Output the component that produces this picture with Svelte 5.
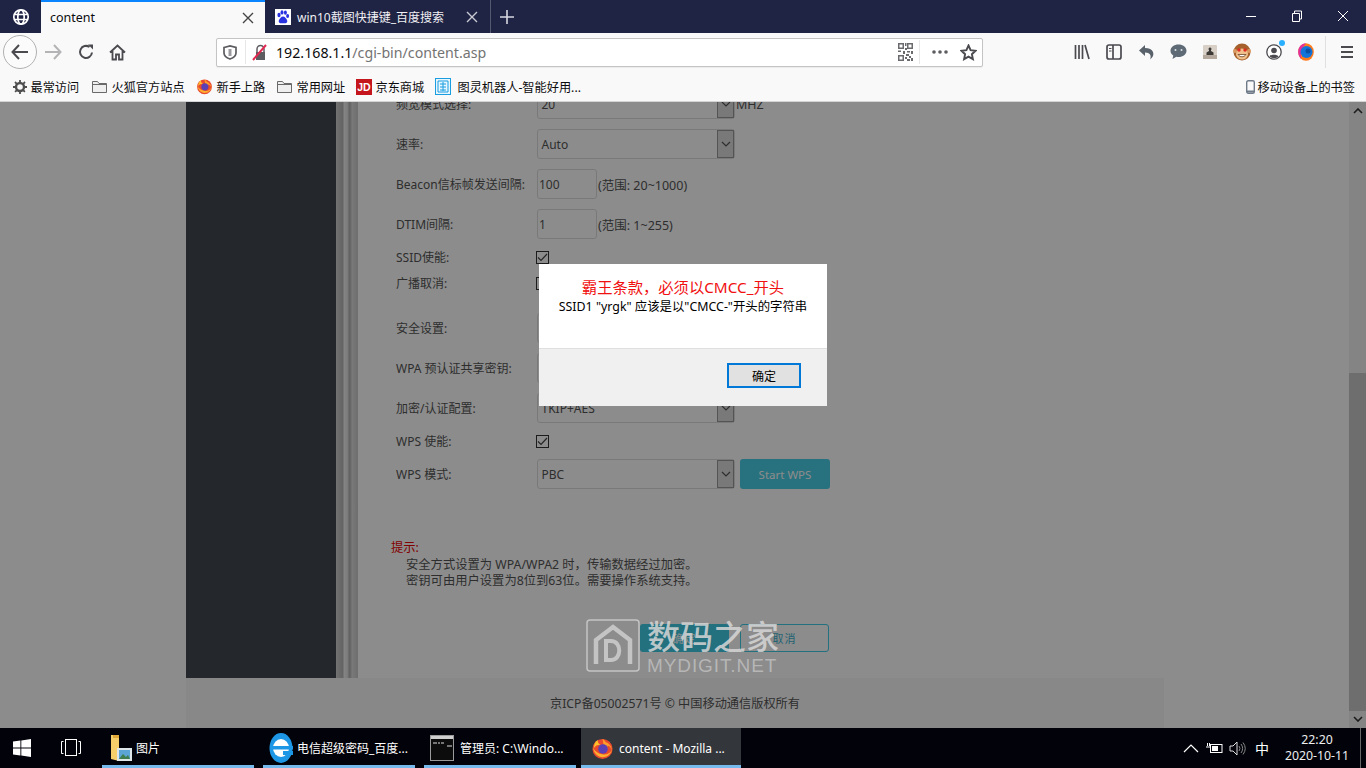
<script>
  // gap is the space above a row, rows are 22px tall
  const rows = [
    { label: "频宽模式选择:", kind: "select", value: "20", after: "MHZ", gap: -9 },
    { label: "速率:", kind: "select", value: "Auto", gap: 18 },
    { label: "Beacon信标帧发送间隔:", kind: "input", value: "100", after: "(范围: 20~1000)", gap: 18 },
    { label: "DTIM间隔:", kind: "input", value: "1", after: "(范围: 1~255)", gap: 18 },
    { label: "SSID使能:", kind: "check", checked: true, gap: 11 },
    { label: "广播取消:", kind: "check", gap: 4 },
    { label: "安全设置:", kind: "select", value: "WPA-PSK/WPA2-PSK", gap: 23 },
    { label: "WPA 预认证共享密钥:", kind: "input", value: "", gap: 18 },
    { label: "加密/认证配置:", kind: "select", value: "TKIP+AES", gap: 18 },
    { label: "WPS 使能:", kind: "check", checked: true, gap: 11 },
    { label: "WPS 模式:", kind: "select", value: "PBC", wps: true, gap: 11 }
  ];
  const bookmarks = [
    { icon: "gear", text: "最常访问", w: 78 },
    { icon: "folder", text: "火狐官方站点", w: 105 },
    { icon: "fox", text: "新手上路", w: 80 },
    { icon: "folder", text: "常用网址", w: 80 },
    { icon: "jd", text: "京东商城", w: 79 },
    { icon: "turing", text: "图灵机器人-智能好用...", w: 150 }
  ];
  const tasks = [
    { icon: "pics", text: "图片" },
    { icon: "ie", text: "电信超级密码_百度..." },
    { icon: "cmd", text: "管理员: C:\\Windo..." },
    { icon: "ff", text: "content - Mozilla ...", active: true }
  ];
</script>

{#snippet fox(size)}
  <svg width={size} height={size} viewBox="0 0 24 24">
    <circle cx="12" cy="12.5" r="10.5" fill="#e8492f" />
    <path d="M12 2c3 1 2 3 5 4 3 2 5 5 5 8-1-3-3-5-5-5 1 2-1 4-3 4z" fill="#ff9d2a" />
    <path d="M2 11c1 6 5 10 10 10 6 0 9-4 10-8-2 4-6 6-10 5-4 0-8-3-10-7z" fill="#ffb02e" />
    <circle cx="12.5" cy="12.5" r="5" fill="#5b3fb5" />
    <path d="M7 3c0 3 1 4 3 5-3 0-6 1-7 4 0-4 1-7 4-9z" fill="#ffc02c" />
  </svg>
{/snippet}

{#snippet folder()}
  <svg width="17" height="16" viewBox="0 0 17 16" fill="#efefef" stroke="#6a6a6a">
    <path d="M1.5 13.5v-11h5l1.5 2h7.5v9z" />
    <path d="M1.5 5.5h14" fill="none" />
  </svg>
{/snippet}

<div class="screen">
  <header class="tabs">
    <div class="tab-icon">
      <svg width="18" height="18" viewBox="0 0 18 18" fill="none" stroke="#fff" stroke-width="1.7">
        <circle cx="9" cy="9" r="7.2" fill="#1f2344" />
        <ellipse cx="9" cy="9" rx="3.2" ry="7.2" />
        <path d="M2 6.5h14M2 11.500h14" />
      </svg>
    </div>
    <div class="tab active">
      <span class="tab-title">content</span>
      <svg class="close" width="12" height="12" viewBox="0 0 12 12" stroke="#444" stroke-width="1.4"><path d="M1 1l10 10M11 1L1 11" /></svg>
    </div>
    <div class="tab other">
      <svg class="baidu" width="16" height="16" viewBox="0 0 16 16">
        <rect width="16" height="16" fill="#fff" />
        <g fill="#2932e1">
          <ellipse cx="4" cy="6" rx="1.6" ry="2.2" />
          <ellipse cx="7" cy="3.4" rx="1.5" ry="2.2" />
          <ellipse cx="10.4" cy="3.6" rx="1.5" ry="2.2" />
          <ellipse cx="12.6" cy="7" rx="1.5" ry="2" />
          <path d="M8 7.5c2 0 3 2 4 3.500 1 2-.5 3.500-2 3.300-1.500-.2-2.500-.2-4 0-1.500.2-3-1.300-2-3.300 1-1.500 2-3.500 4-3.500z" />
        </g>
      </svg>
      <span class="tab-title">win10截图快捷键_百度搜索</span>
      <svg class="close" width="12" height="12" viewBox="0 0 12 12" stroke="#c9cad3" stroke-width="1.4"><path d="M1 1l10 10M11 1L1 11" /></svg>
    </div>
    <div class="new-tab">
      <svg width="14" height="14" viewBox="0 0 14 14" stroke="#d7d8e0" stroke-width="1.6"><path d="M7 0v14M0 7h14" /></svg>
    </div>
    <div class="win-btns">
      <svg width="46" height="12" viewBox="0 0 46 12" stroke="#fff"><path d="M18 6.500h10" /></svg>
      <svg width="46" height="12" viewBox="0 0 46 12" fill="none" stroke="#fff"><path d="M18.500 3.500h7v8h-7zM20.500 3.500v-2.500h7v8h-2" /></svg>
      <svg width="46" height="12" viewBox="0 0 46 12" stroke="#fff"><path d="M18 1l10 10M28 1L18 11" /></svg>
    </div>
  </header>

  <nav class="toolbar">
    <button class="back" aria-label="back">
      <svg width="18" height="16" viewBox="0 0 18 16" fill="none" stroke="#4a4a4f" stroke-width="2"><path d="M8 1L1.500 8 8 15M2 8h15" /></svg>
    </button>
    <div class="cell">
      <svg width="18" height="16" viewBox="0 0 18 16" fill="none" stroke="#b4b4b6" stroke-width="2"><path d="M10 1l6.500 7L10 15M16 8H1" /></svg>
    </div>
    <div class="cell reload">
      <svg width="16" height="16" viewBox="0 0 16 16" fill="none" stroke="#4a4a4f" stroke-width="2"><path d="M14 8.500A6 6 0 1 1 11.500 3" /><path d="M10 .5h5v5z" fill="#4a4a4f" stroke="none" /></svg>
    </div>
    <div class="cell">
      <svg width="17" height="17" viewBox="0 0 17 17" fill="none" stroke="#4a4a4f" stroke-width="1.800"><path d="M1 8.500L8.500 1.500 16 8.500M3.500 7v8.500h3.500v-5h3v5h3.500V7" /></svg>
    </div>
    <div class="urlbar">
      <svg class="shield" width="14" height="15" viewBox="0 0 14 15" fill="none" stroke="#5c5c61" stroke-width="1.700"><path d="M1 2.500L7 1l6 1.500V8c0 3-3 5-6 6-3-1-6-3-6-6z" /><path d="M7 4v7" stroke-width="3" stroke="#9a9a9e" /></svg>
      <span class="url-sep"></span>
      <svg class="lock" width="16" height="17" viewBox="0 0 16 17"><path d="M4 16V8h9v8z" fill="#5c5c61" /><path d="M5 8V5a3.500 3.500 0 0 1 7 0v3" fill="none" stroke="#5c5c61" stroke-width="1.500" /><path d="M1 16L14 1" stroke="#e22850" stroke-width="2" /></svg>
      <span class="url"><b>192.168.1.1</b>/cgi-bin/content.asp</span>
      <svg class="qr" width="15" height="18" viewBox="0 0 15 18" fill="#6b6b6f">
        <path d="M0 0h6v6H0zM1.500 1.500v3h3v-3zM9 0h6v6H9zM10.500 1.500v3h3v-3zM0 12h6v6H0zM1.500 13.500v3h3v-3zM7 0h1.500v3H7zM7 5h2v2H7zM0 7.500h3V9H0zM5 8h2v3H5zM9 8h3v1.500H9zM13 8h2v3h-2zM8 11h3v2H8zM7 14h2v2H7zM11 13h2v2h-2zM13 15h2v3h-2zM9 16h3v2H9z" />
      </svg>
      <span class="url-sep right"></span>
      <svg class="dots" width="16" height="4" viewBox="0 0 16 4" fill="#5c5c61"><circle cx="2" cy="2" r="1.800" /><circle cx="8" cy="2" r="1.800" /><circle cx="14" cy="2" r="1.800" /></svg>
      <svg class="star" width="17" height="17" viewBox="0 0 17 17" fill="none" stroke="#4a4a4f" stroke-width="1.900"><path d="M8.500 1.500l2.100 4.700 5 .6-3.700 3.400 1 5-4.400-2.500-4.400 2.500 1-5L1.400 6.800l5-.6z" /></svg>
    </div>
    <div class="tools">
      <div class="tool"><svg width="16" height="16" viewBox="0 0 16 16" stroke="#4a4a4f" stroke-width="1.700"><path d="M1.500 1v14M5 1v14M8.500 1v14M11 1l4 14" /></svg></div>
      <div class="tool"><svg width="16" height="16" viewBox="0 0 16 16" fill="none" stroke="#4a4a4f" stroke-width="1.700"><rect x="1" y="1" width="14" height="14" rx="2" /><path d="M7 1v14" /><path d="M3 4.500h2.500M3 7h2.500" stroke-width="1" /></svg></div>
      <div class="tool"><svg width="15" height="16" viewBox="0 0 15 16"><path d="M6 1L0 6.500 6 12V8.500c3 0 5 1 5.500 3 .3 1.500 0 3-.5 4 3-2 4-5 3-7.500-1-2.500-4-4-8-4z" fill="#59626b" /></svg></div>
      <div class="tool"><svg width="17" height="16" viewBox="0 0 17 16"><path d="M8.500 0.500c4.500 0 8 2.700 8 6.200s-3.500 6.300-8 6.300c-.8 0-1.500-.1-2.200-.2L2.500 15l.8-3.500C1.500 10.300.5 8.600.5 6.700c0-3.500 3.500-6.200 8-6.200z" fill="#5e6a75" /><circle cx="5.500" cy="6" r="1" fill="#dfe3e6" /><circle cx="11.500" cy="6" r="1" fill="#dfe3e6" /></svg></div>
      <div class="tool"><svg width="14" height="14" viewBox="0 0 14 14"><rect width="14" height="14" rx="1" fill="#d8cfc6" /><rect y="10" width="14" height="4" fill="#b5a99d" /><path d="M7 2.500a1.500 1.500 0 0 1 1 2.600V6l2.500 1.500V10h-7V7.500L6 6v-.9a1.500 1.500 0 0 1 1-2.600z" fill="#3d3a38" /></svg></div>
      <div class="tool"><svg width="18" height="18" viewBox="0 0 18 18"><circle cx="9" cy="9" r="8.500" fill="#a5602c" /><circle cx="2" cy="8" r="2" fill="#d99a62" /><circle cx="16" cy="8" r="2" fill="#d99a62" /><ellipse cx="9" cy="11" rx="6" ry="5.500" fill="#f0c08c" /><circle cx="6" cy="7" r="1.700" fill="#e02b20" /><circle cx="12" cy="7" r="1.700" fill="#e02b20" /><path d="M5 11.500c2 3 6 3 8 0z" fill="#fff" stroke="#5b3010" stroke-width=".7" /></svg></div>
      <div class="tool user">
        <svg width="16" height="16" viewBox="0 0 16 16"><circle cx="8" cy="8" r="7.200" fill="#fff" stroke="#4a4a4f" stroke-width="1.300" /><circle cx="8" cy="6.500" r="2.800" fill="#4a4a4f" /><path d="M3.500 12.500c1-2.500 8-2.500 9 0-2 2-7 2-9 0z" fill="#4a4a4f" /></svg>
        <span class="dot"></span>
      </div>
      <div class="tool"><svg width="16" height="18" viewBox="0 0 16 18"><ellipse cx="8" cy="9" rx="7.800" ry="8.800" fill="#ff7a1a" /><path d="M8 .2C3.700.2.200 4 .2 9c0 3 1.300 5.500 3.300 7C2 13 3 5 8 .2z" fill="#e12f9c" /><circle cx="8.500" cy="9" r="6" fill="#1273d9" /><circle cx="10" cy="8" r="2.500" fill="#0b4fa5" /></svg></div>
      <span class="tool-sep"></span>
      <div class="tool menu"><svg width="14" height="14" viewBox="0 0 14 14" stroke="#4a4a4f" stroke-width="2"><path d="M1 2h12M1 7h12M1 12h12" /></svg></div>
    </div>
  </nav>

  <div class="bookmarks">
    {#each bookmarks as b}
      <div class="bm" style="width: {b.w}px">
        {#if b.icon === "gear"}
          <svg width="14" height="14" viewBox="0 0 14 14"><circle cx="7" cy="7" r="4" fill="none" stroke="#4f4f4f" stroke-width="2.400" /><path d="M7 0v14M0 7h14M2 2l10 10M12 2L2 12" stroke="#4f4f4f" stroke-width="1.800" stroke-dasharray="2.500 9" /></svg>
        {:else if b.icon === "folder"}
          {@render folder()}
        {:else if b.icon === "fox"}
          {@render fox(17)}
        {:else if b.icon === "jd"}
          <span class="jd">JD</span>
        {:else}
          <svg class="turing" width="16" height="17" viewBox="0 0 16 17"><rect x=".5" y=".5" width="15" height="16" fill="#e8f6fd" stroke="#1b9de2" /><path d="M3 3h10v11H3zM5 6h6M5 9h6M5 12h6M8 4v9" fill="none" stroke="#1b9de2" /></svg>
        {/if}
        <span>{b.text}</span>
      </div>
    {/each}
    <div class="bm mobile">
      <svg width="9" height="14" viewBox="0 0 9 14" fill="none"><rect x=".7" y=".7" width="7.600" height="12.600" rx="1.500" stroke="#6f7b88" stroke-width="1.400" /><path d="M1 11.500h7" stroke="#6f7b88" stroke-width="2" /></svg>
      <span>移动设备上的书签</span>
    </div>
  </div>

  <main class="viewport">
    <div class="page">
      <div class="side"></div>
      <div class="stripes"></div>
      <div class="content">
        <div class="form">
          {#each rows as r}
            <div class="row" style="margin-top: {r.gap}px">
              <span class="label">{r.label}</span>
              {#if r.kind === "select"}
                <span class="select">
                  <span class="sel-value">{r.value}</span>
                  <span class="sel-btn">
                    <svg width="10" height="6" viewBox="0 0 10 6" fill="none" stroke="#555" stroke-width="1.200"><path d="M1 1l4 4 4-4" /></svg>
                  </span>
                </span>
              {:else if r.kind === "input"}
                <span class="input">{r.value}</span>
              {:else}
                <span class="check">
                  {#if r.checked}
                    <svg width="11" height="9" viewBox="0 0 11 9" fill="none" stroke="#444" stroke-width="1.200"><path d="M1 4.500l3 3L10 1" /></svg>
                  {/if}
                </span>
              {/if}
              {#if r.after}<span class="after">{r.after}</span>{/if}
              {#if r.wps}<span class="wps">Start WPS</span>{/if}
            </div>
          {/each}
        </div>
        <div class="hint">
          <p class="hint-title">提示:</p>
          <p>安全方式设置为 WPA/WPA2 时，传输数据经过加密。</p>
          <p>密钥可由用户设置为8位到63位。需要操作系统支持。</p>
        </div>
        <div class="actions">
          <span class="ok">确定</span>
          <span class="cancel">取消</span>
        </div>
      </div>
    </div>
    <div class="footer">京ICP备05002571号 © 中国移动通信版权所有</div>
    <div class="scrollbar">
      <svg class="up" width="10" height="6" viewBox="0 0 10 6" fill="none" stroke="#333" stroke-width="1.600"><path d="M1 5l4-4 4 4" /></svg>
      <div class="thumb"></div>
      <svg class="down" width="10" height="6" viewBox="0 0 10 6" fill="none" stroke="#333" stroke-width="1.600"><path d="M1 1l4 4 4-4" /></svg>
    </div>
    <div class="mask"></div>

    <div class="dialog">
      <div class="dlg-body">
        <p class="dlg-title">霸王条款，必须以CMCC_开头</p>
        <p class="dlg-text">SSID1 "yrgk" 应该是以"CMCC-"开头的字符串</p>
      </div>
      <div class="dlg-foot"><span class="dlg-btn">确定</span></div>
    </div>

    <div class="watermark">
      <svg width="54" height="53" viewBox="0 0 54 53" fill="none" stroke="#c4c4c4">
        <rect x="1" y="1" width="52" height="51" rx="3" stroke-width="1.500" />
        <path d="M10 45V21L27 8l17 13v24" stroke-width="4.500" />
        <path d="M20 22h5c11 0 11 19 0 19h-5z" stroke-width="4" />
      </svg>
      <div class="wm-text">
        <span class="wm-cn">数码之家</span>
        <span class="wm-en">MYDIGIT.NET</span>
      </div>
    </div>
  </main>

  <footer class="taskbar">
    <div class="start">
      <svg width="18" height="18" viewBox="0 0 18 18" fill="#fff"><path d="M0 2.600l7.400-1v7H0zM8.300 1.400L18 0v8.600H8.300zM0 9.400h7.400v7L0 15.400zM8.300 9.400H18V18l-9.700-1.400z" /></svg>
    </div>
    <div class="taskview">
      <svg width="20" height="18" viewBox="0 0 20 18" fill="none" stroke="#fff"><rect x="4.500" y=".5" width="11" height="16" /><path d="M2.500 2.500H.5v12h2M17.500 2.500h2v12h-2" /></svg>
    </div>
    <div class="task-list">
      {#each tasks as t}
        <div class="task" class:on={t.active}>
          {#if t.icon === "pics"}
            <svg width="21" height="28" viewBox="0 0 21 28"><path d="M0 1h8v26l-8-2z" fill="#f6cf6b" /><path d="M2 1h6v3H2z" fill="#e0a93a" /><rect x="6" y="14" width="15" height="13" fill="#dfe6ea" /><rect x="8" y="16" width="11" height="9" fill="#5aa5d6" /><path d="M8 25l4-5 3 3 2-2 2 4z" fill="#3f7d4e" /></svg>
          {:else if t.icon === "ie"}
            <svg width="24" height="32" viewBox="0 0 24 32"><ellipse cx="12" cy="16" rx="11.500" ry="15" fill="#1e96e6" /><ellipse cx="12" cy="16" rx="8" ry="9" fill="#fff" /><rect x="4" y="14" width="20" height="3.500" fill="#1e96e6" /><rect x="14" y="19" width="10" height="4" fill="#1e96e6" /></svg>
          {:else if t.icon === "cmd"}
            <svg width="24" height="26" viewBox="0 0 24 26"><rect x=".5" y=".5" width="23" height="25" fill="#0c0c0c" stroke="#9a9a9a" /><rect x="1" y="1" width="22" height="3" fill="#cfcfcf" /><path d="M3 8h4M8 8h2M11 8h3M17 11h5" stroke="#ddd" /></svg>
          {:else}
            {@render fox(23)}
          {/if}
          <span>{t.text}</span>
        </div>
      {/each}
    </div>
    <div class="tray">
      <svg class="caret" width="16" height="9" viewBox="0 0 16 9" fill="none" stroke="#fff" stroke-width="1.200"><path d="M1 8l7-7 7 7" /></svg>
      <svg class="battery" width="17" height="12" viewBox="0 0 17 12" fill="none" stroke="#fff"><rect x="4.500" y="2.500" width="11.500" height="8" /><rect x="6" y="4" width="6" height="5" fill="#fff" stroke="none" /><path d="M0 5h4M1.500 1v3M3.500 1v3" /></svg>
      <svg class="volume" width="17" height="15" viewBox="0 0 17 15" fill="none" stroke="#ddd"><path d="M1 5h3l4-4v13l-4-4H1z" /><path d="M10 5a4 4 0 0 1 0 5M12 3a7 7 0 0 1 0 9M14 1.500a10 10 0 0 1 0 12" stroke="#888" /></svg>
      <span class="ime">中</span>
      <div class="clock"><span>22:20</span><span>2020-10-11</span></div>
      <span class="show-desk"></span>
    </div>
  </footer>
</div>

<style>
  :global(body) {
    margin: 0;
    overflow: hidden;
  }

  p {
    margin: 0;
  }

  .screen {
    width: 1366px;
    height: 768px;
    display: flex;
    flex-direction: column;
    font-family: "Noto Sans", "Noto Sans CJK SC", sans-serif;
    font-size: 12px;
    overflow: hidden;
  }

  /* tab strip */
  .tabs {
    height: 33px;
    background: #1f2344;
    display: flex;
    align-items: stretch;
    flex: none;
  }

  .tab-icon {
    width: 41px;
    display: flex;
    align-items: center;
    justify-content: center;
  }

  .tab {
    display: flex;
    align-items: center;
    box-sizing: border-box;
    flex: none;
  }

  .tab.active {
    width: 224px;
    padding: 0 11px 0 9px;
    background: #f9f9fa;
    border-top: 2px solid #0a84ff;
    color: #0c0c0d;
    justify-content: space-between;
    font-size: 12.500px;
  }

  .tab.other {
    width: 226px;
    padding: 0 12px 0 10px;
    gap: 6px;
    color: #f0f0f4;
    border-right: 1px solid #555871;
  }

  .baidu {
    flex: none;
  }

  .tab.other .close {
    margin-left: auto;
  }

  .new-tab {
    width: 32px;
    display: flex;
    align-items: center;
    justify-content: center;
  }

  .win-btns {
    margin-left: auto;
    display: flex;
    align-items: center;
    padding-bottom: 1px;
  }

  /* nav toolbar */
  .toolbar {
    height: 38px;
    background: #f9f9fa;
    display: flex;
    align-items: center;
    flex: none;
    padding-left: 3px;
  }

  .back {
    width: 34px;
    height: 34px;
    border-radius: 50%;
    border: 1px solid #b1b1b3;
    background: #fbfbfb;
    padding: 0;
    display: flex;
    align-items: center;
    justify-content: center;
    box-sizing: border-box;
  }

  .cell {
    width: 32px;
    display: flex;
    justify-content: center;
  }

  .cell.reload {
    padding-left: 2px;
    box-sizing: border-box;
  }

  .urlbar {
    margin-left: 83px;
    width: 767px;
    height: 29px;
    background: #fff;
    border: 1px solid #c4c4c4;
    border-radius: 2px;
    box-sizing: border-box;
    display: flex;
    align-items: center;
    box-shadow: 0 1px 1px rgba(0, 0, 0, 0.06);
  }

  .shield {
    margin-left: 6px;
  }

  .url-sep {
    width: 1px;
    height: 24px;
    background: #e8e8e8;
    margin-left: 8px;
  }

  .lock {
    margin-left: 6px;
  }

  .url {
    margin-left: 8px;
    font-size: 14.200px;
    color: #737373;
    flex: 1;
  }

  .url b {
    font-weight: 400;
    color: #0c0c0d;
  }

  .url-sep.right {
    margin-left: 6px;
  }

  .dots {
    margin-left: 12px;
  }

  .star {
    margin-left: 12px;
    margin-right: 5px;
  }

  .tools {
    margin-left: auto;
    display: flex;
    align-items: center;
    padding-right: 3px;
  }

  .tool {
    width: 32px;
    display: flex;
    justify-content: center;
    position: relative;
  }

  .dot {
    position: absolute;
    top: -4px;
    right: 5px;
    width: 6px;
    height: 6px;
    border-radius: 50%;
    background: #2ab0ff;
  }

  .tool-sep {
    width: 1px;
    height: 32px;
    background: #e0e0e2;
    margin: 0 5px 0 3px;
  }

  /* bookmarks */
  .bookmarks {
    height: 31px;
    box-sizing: border-box;
    background: #f9f9fa;
    border-bottom: 1px solid #d4d4d6;
    display: flex;
    align-items: center;
    padding: 1px 0 0 13px;
    flex: none;
    color: #0c0c0d;
    font-size: 12.200px;
  }

  .bm {
    display: flex;
    align-items: center;
    gap: 3.500px;
    white-space: nowrap;
    flex: none;
  }

  .turing {
    margin-right: 3px;
  }

  .jd {
    width: 16px;
    height: 16px;
    background: #c4161c;
    color: #fff;
    font: 700 10.500px "Liberation Sans", sans-serif;
    display: flex;
    align-items: center;
    justify-content: center;
  }

  .bm.mobile {
    margin-left: auto;
    padding-right: 11px;
    gap: 3px;
  }

  /* page viewport */
  .viewport {
    flex: 1;
    position: relative;
    overflow: hidden;
    background: #fff;
  }

  .page {
    width: 978px;
    height: 576px;
    margin-left: 186px;
    display: flex;
    overflow: hidden;
  }

  .side {
    width: 150px;
    background: #434952;
    flex: none;
  }

  .stripes {
    width: 22px;
    flex: none;
    background: linear-gradient(
      90deg,
      #d1d1d1 0,
      #b4b4b4 7px,
      #f2f2f2 8px,
      #dedede 12px,
      #afafaf 13px,
      #c3c3c3 15px,
      #dedede 16px,
      #c8c8c8 22px
    );
  }

  .content {
    flex: 1;
    padding-left: 33px;
    color: #333;
    min-width: 0;
  }

  .form {
    margin-left: 5px;
  }

  .row {
    height: 22px;
    display: flex;
    align-items: center;
    font-size: 12px;
    color: #555;
  }

  .label {
    width: 141px;
    flex: none;
  }

  .select {
    width: 198px;
    height: 30px;
    box-sizing: border-box;
    border: 1px solid #ddd;
    border-radius: 3px;
    display: flex;
    align-items: center;
    justify-content: space-between;
    color: #555;
    flex: none;
    background: #fff;
  }

  .sel-value {
    padding-left: 3.500px;
  }

  .sel-btn {
    width: 17px;
    height: 28px;
    background: #dcdcdc;
    border: 1px solid #999;
    box-sizing: border-box;
    display: flex;
    align-items: center;
    justify-content: center;
  }

  .input {
    width: 60px;
    height: 30px;
    box-sizing: border-box;
    border: 1px solid #ddd;
    border-radius: 3px;
    padding-left: 1px;
    display: flex;
    align-items: center;
    background: #fff;
    flex: none;
  }

  .check {
    width: 13px;
    height: 13px;
    box-sizing: border-box;
    margin-left: -1px;
    border: 1px solid #333;
    background: #fff;
    display: flex;
    align-items: center;
    justify-content: center;
  }

  .after {
    margin-left: 1px;
    font-size: 12.500px;
  }

  .wps {
    margin-left: 5px;
    width: 90px;
    height: 30px;
    background: #41cce5;
    border-radius: 3px;
    color: #fff;
    opacity: 0.95;
    display: flex;
    align-items: center;
    justify-content: center;
    font-size: 11.500px;
  }

  .hint {
    margin-top: 53px;
    padding-left: 15px;
    font-size: 12.300px;
    line-height: 16px;
    color: #555;
  }

  .hint-title {
    color: #e00;
    margin-left: -15px;
    line-height: 19px;
  }

  .actions {
    margin-top: 35px;
    margin-left: 249px;
    display: flex;
    gap: 11px;
  }

  .ok,
  .cancel {
    width: 89px;
    height: 28px;
    box-sizing: border-box;
    border-radius: 3px;
    display: flex;
    align-items: center;
    justify-content: center;
    font-size: 11px;
    letter-spacing: 1px;
  }

  .ok {
    background: #41cce5;
    color: #fff;
  }

  .cancel {
    border: 1px solid #41cce5;
    color: #41b5d0;
  }

  .footer {
    margin-left: 186px;
    width: 978px;
    height: 50px;
    background: #f8f8f8;
    display: flex;
    align-items: center;
    justify-content: center;
    color: #555;
    font-size: 12.200px;
  }

  .scrollbar {
    position: absolute;
    right: 0;
    top: 0;
    bottom: 0;
    width: 17px;
    background: #f1f1f1;
  }

  .up,
  .down {
    position: absolute;
    left: 4px;
  }

  .up {
    top: 6px;
  }

  .down {
    bottom: 6px;
  }

  .thumb {
    position: absolute;
    top: 271px;
    bottom: 17px;
    left: 0;
    right: 0;
    background: #c8c8c8;
  }

  .mask {
    position: absolute;
    inset: 0;
    background: rgba(0, 0, 0, 0.45);
  }

  /* alert */
  .dialog {
    position: absolute;
    left: 539px;
    top: 162px;
    width: 288px;
    height: 142px;
    background: #fff;
    display: flex;
    flex-direction: column;
  }

  .dlg-body {
    height: 85px;
    box-sizing: border-box;
    padding-top: 13px;
    text-align: center;
    border-bottom: 1px solid #dfdfdf;
  }

  .dlg-title {
    color: #f01010;
    font-size: 15.300px;
    line-height: 21px;
  }

  .dlg-text {
    color: #000;
    font-size: 12.400px;
    line-height: 18px;
    white-space: nowrap;
  }

  .dlg-foot {
    flex: 1;
    background: #f0f0f0;
    padding: 14px 26px 0 0;
    display: flex;
    justify-content: flex-end;
    align-items: flex-start;
  }

  .dlg-btn {
    width: 74px;
    height: 25px;
    box-sizing: border-box;
    border: 2px solid #0078d7;
    background: #e1e1e1;
    display: flex;
    align-items: center;
    justify-content: center;
    color: #000;
  }

  .watermark {
    position: absolute;
    left: 586px;
    top: 517px;
    display: flex;
    gap: 7px;
    color: rgba(214, 214, 214, 0.85);
  }

  .wm-text {
    display: flex;
    flex-direction: column;
    margin-top: -1px;
  }

  .wm-cn {
    font-size: 33px;
    line-height: 38px;
    font-weight: 500;
  }

  .wm-en {
    font: 19px/20px "Liberation Sans", sans-serif;
    letter-spacing: 0.9px;
    color: rgba(190, 190, 190, 0.85);
  }

  /* windows taskbar */
  .taskbar {
    height: 40px;
    background: #02030a;
    display: flex;
    align-items: stretch;
    flex: none;
    color: #fff;
  }

  .start {
    width: 44px;
    display: flex;
    align-items: center;
    justify-content: center;
  }

  .taskview {
    width: 58px;
    display: flex;
    align-items: center;
    justify-content: center;
    box-sizing: border-box;
    padding-right: 4px;
  }

  .task-list {
    display: flex;
    gap: 9px;
  }

  .task {
    width: 152px;
    box-sizing: border-box;
    border-bottom: 3px solid #76b9ed;
    display: flex;
    align-items: center;
    gap: 4px;
    padding-left: 8px;
    white-space: nowrap;
    overflow: hidden;
    padding-top: 3px;
    font-size: 12px;
  }

  .task:nth-child(1) {
    padding-left: 9px;
  }

  .task:nth-child(2) {
    padding-left: 6px;
  }

  .task:nth-child(3) {
    padding-left: 6px;
    gap: 6px;
  }

  .task.on {
    width: 160px;
    margin-left: -4px;
    background: #33363b;
    padding-left: 10px;
    gap: 5px;
  }

  .tray {
    margin-left: auto;
    display: flex;
    align-items: center;
  }

  .caret {
    margin-right: 7px;
  }

  .battery {
    margin-right: 6px;
  }

  .volume {
    margin-right: 4px;
  }

  .ime {
    font-size: 14px;
    width: 24px;
    text-align: center;
  }

  .clock {
    width: 86px;
    display: flex;
    flex-direction: column;
    align-items: center;
    font-size: 12.300px;
    line-height: 16px;
    color: #eee;
  }

  .show-desk {
    width: 5px;
    align-self: stretch;
    border-left: 1px solid #666;
  }
</style>
